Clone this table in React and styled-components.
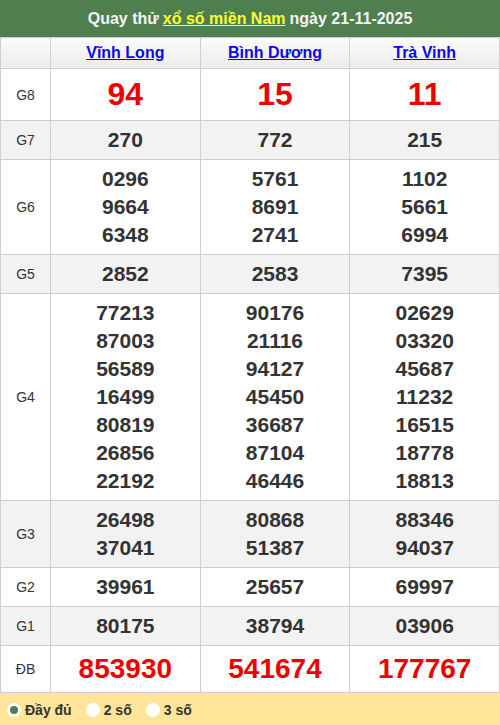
import React from "react";
import styled, { createGlobalStyle } from "styled-components";

const Global = createGlobalStyle`
  html, body { margin: 0; padding: 0; background: #fff; }
  body { font-family: "Liberation Sans", Arial, sans-serif; }
`;

const Wrap = styled.div`
  width: 500px;
`;

const Title = styled.div`
  height: 37px;
  background: #4f7e4f;
  color: #f4f4f4;
  font-weight: bold;
  font-size: 16px;
  display: flex;
  align-items: center;
  justify-content: center;
`;

const TitleLink = styled.a`
  color: #ffff33;
  text-decoration: underline;
  margin: 0 4px;
`;

const Table = styled.table`
  width: 500px;
  border-collapse: collapse;
  table-layout: fixed;
`;

const HeadCell = styled.th`
  border: 1px solid #cfcfcf;
  background: linear-gradient(#fbfbfb, #ebebeb);
  height: 20px;
  padding: 5px 0;
  line-height: 20px;
  font-size: 16px;
  font-weight: bold;
  text-align: center;
`;

const ProvLink = styled.a`
  color: #0a0ae6;
  text-decoration: underline;
`;

const Row = styled.tr`
  background: ${(p) => (p.$alt ? "#f2f2f2" : "#fff")};
`;

const Label = styled.td`
  border: 1px solid #cfcfcf;
  text-align: center;
  font-size: 14px;
  color: #333;
  padding: 0;
`;

const Cell = styled.td`
  border: 1px solid #cfcfcf;
  text-align: center;
  padding: 5px 0;
  font-weight: bold;
  color: ${(p) => (p.$big ? "#ee0000" : "#333")};
  font-size: ${(p) => (p.$big === "g8" ? "32px" : p.$big === "db" ? "28px" : "21px")};
  line-height: ${(p) => (p.$big === "g8" ? "41px" : p.$big === "db" ? "36px" : "28px")};
`;

const Footer = styled.div`
  height: 33px;
  background: #ffe499;
  display: flex;
  align-items: center;
  padding-left: 7px;
  gap: 14px;
`;

const Option = styled.label`
  display: flex;
  align-items: center;
  gap: 4px;
  font-size: 14px;
  font-weight: bold;
  color: #333;
`;

const Radio = styled.span`
  width: 14px;
  height: 14px;
  border-radius: 50%;
  background: #fff;
  display: flex;
  align-items: center;
  justify-content: center;
  &::after {
    content: "";
    width: 8px;
    height: 8px;
    border-radius: 50%;
    background: ${(p) => (p.$on ? "#4f7e4f" : "transparent")};
  }
`;

const rows = [
  { g: "G8", big: "g8", v: [["94"], ["15"], ["11"]] },
  { g: "G7", v: [["270"], ["772"], ["215"]] },
  { g: "G6", v: [["0296", "9664", "6348"], ["5761", "8691", "2741"], ["1102", "5661", "6994"]] },
  { g: "G5", v: [["2852"], ["2583"], ["7395"]] },
  {
    g: "G4",
    v: [
      ["77213", "87003", "56589", "16499", "80819", "26856", "22192"],
      ["90176", "21116", "94127", "45450", "36687", "87104", "46446"],
      ["02629", "03320", "45687", "11232", "16515", "18778", "18813"],
    ],
  },
  { g: "G3", v: [["26498", "37041"], ["80868", "51387"], ["88346", "94037"]] },
  { g: "G2", v: [["39961"], ["25657"], ["69997"]] },
  { g: "G1", v: [["80175"], ["38794"], ["03906"]] },
  { g: "ĐB", big: "db", v: [["853930"], ["541674"], ["177767"]] },
];

export default function App() {
  return (
    <Wrap>
      <Global />
      <Title>
        Quay thử <TitleLink href="#">xổ số miền Nam</TitleLink> ngày 21-11-2025
      </Title>
      <Table>
        <colgroup>
          <col style={{ width: "50px" }} />
          <col />
          <col />
          <col />
        </colgroup>
        <thead>
          <tr>
            <HeadCell />
            <HeadCell><ProvLink href="#">Vĩnh Long</ProvLink></HeadCell>
            <HeadCell><ProvLink href="#">Bình Dương</ProvLink></HeadCell>
            <HeadCell><ProvLink href="#">Trà Vinh</ProvLink></HeadCell>
          </tr>
        </thead>
        <tbody>
          {rows.map((r, i) => (
            <Row key={r.g} $alt={i % 2 === 1}>
              <Label>{r.g}</Label>
              {r.v.map((list, j) => (
                <Cell key={j} $big={r.big}>
                  {list.map((n) => (
                    <div key={n}>{n}</div>
                  ))}
                </Cell>
              ))}
            </Row>
          ))}
        </tbody>
      </Table>
      <Footer>
        <Option><Radio $on />Đầy đủ</Option>
        <Option><Radio />2 số</Option>
        <Option><Radio />3 số</Option>
      </Footer>
    </Wrap>
  );
}
